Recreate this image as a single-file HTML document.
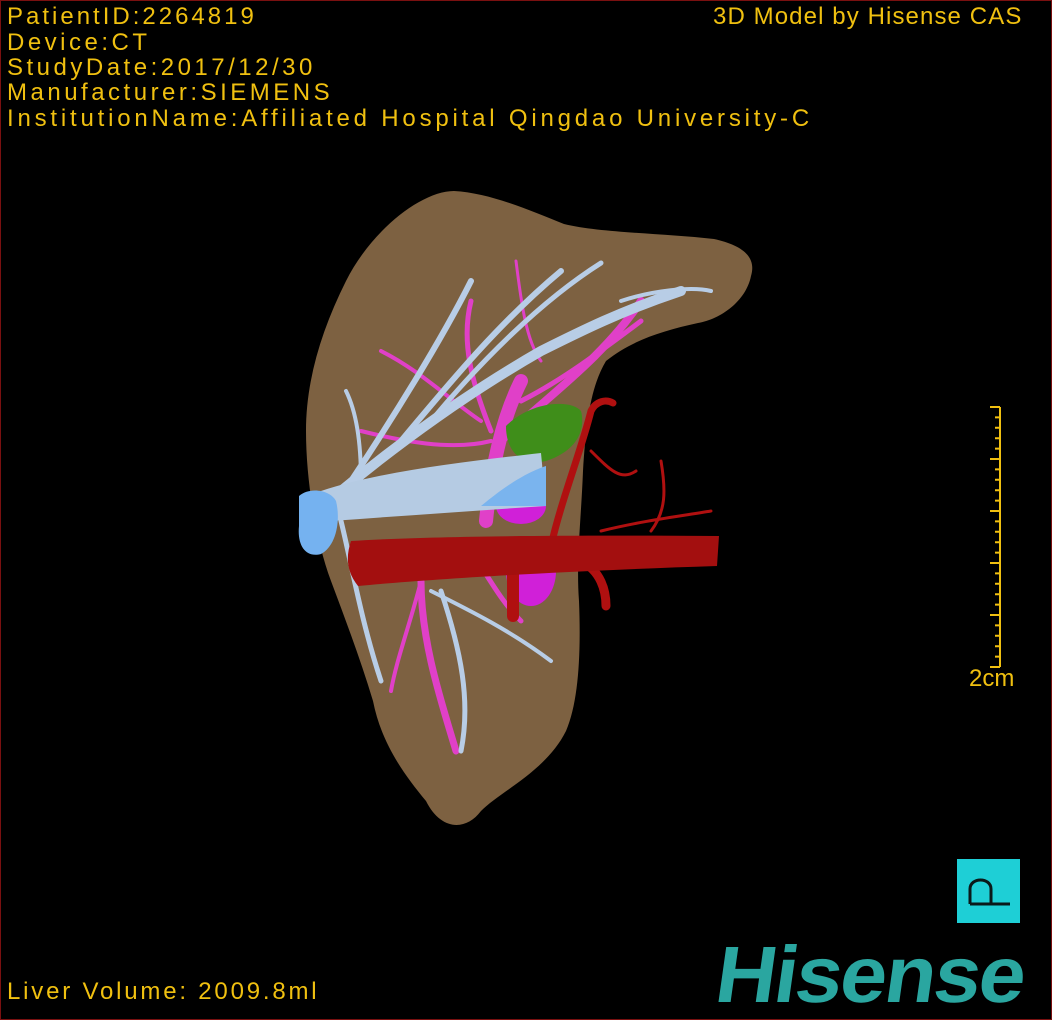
<!DOCTYPE html>
<html><head><meta charset="utf-8"><style>
html,body{margin:0;padding:0;background:#000;}
#w{position:relative;width:1052px;height:1020px;background:#000;overflow:hidden;box-sizing:border-box;border:1px solid #7a1010;}
.t{position:absolute;color:#f0c010;font-family:"Liberation Sans Narrow","Liberation Sans",sans-serif;font-size:24px;line-height:25px;white-space:pre;letter-spacing:3.5px;}
</style></head><body><div id="w">
<div class="t" style="left:6px;top:3px;letter-spacing:3px">PatientID:2264819</div>
<div class="t" style="left:6px;top:29px;">Device:CT</div>
<div class="t" style="left:6px;top:54px;">StudyDate:2017/12/30</div>
<div class="t" style="left:6px;top:79px;">Manufacturer:SIEMENS</div>
<div class="t" style="left:6px;top:105px;letter-spacing:3.8px">InstitutionName:Affiliated Hospital Qingdao University-C</div>
<div class="t" style="left:712px;top:3px;letter-spacing:1.1px;">3D Model by Hisense CAS</div>
<div class="t" style="left:6px;top:978px;letter-spacing:2.8px;">Liver Volume: 2009.8ml</div>
<div class="t" style="left:968px;top:665px;letter-spacing:0">2cm</div>
<svg width="1052" height="1020" style="position:absolute;left:0;top:0">
<path d="M453,190 C490,192 530,210 563,223 C600,232 660,232 713,238 C740,244 756,255 750,275 C745,300 720,318 697,322 C660,330 630,340 605,360 C590,385 585,420 582,470 C580,520 575,560 578,600 C580,650 578,700 565,730 C545,770 500,790 480,810 C465,830 440,830 425,800 C400,770 380,740 372,700 C360,660 345,620 330,580 C315,540 305,480 305,430 C305,380 320,330 345,280 C370,230 420,190 453,190 Z" fill="#7d6141"/>
<g stroke="#e040c8" fill="none" stroke-linecap="round">
<path d="M485,520 C490,470 500,420 520,380" stroke-width="14"/>
<path d="M500,440 C540,400 600,360 640,300" stroke-width="8"/>
<path d="M520,400 C560,380 600,350 640,320" stroke-width="5"/>
<path d="M490,430 C470,380 460,340 470,300" stroke-width="5"/>
<path d="M480,420 C450,400 420,370 380,350" stroke-width="4"/>
<path d="M490,440 C450,450 400,440 360,430" stroke-width="4"/>
<path d="M420,580 C420,640 440,700 455,750" stroke-width="7"/>
<path d="M420,580 C410,620 395,660 390,690" stroke-width="4"/>
<path d="M470,550 C490,580 500,600 520,620" stroke-width="5"/>
<path d="M515,260 C520,300 525,340 540,360" stroke-width="3"/>
</g>
<ellipse cx="530" cy="570" rx="25" ry="35" fill="#d020d8"/>
<ellipse cx="520" cy="505" rx="25" ry="18" fill="#d020d8"/>
<path d="M505,425 C530,400 570,398 580,410 C585,430 575,450 545,460 C525,465 505,455 505,425 Z" fill="#3f8e1a"/>
<g stroke="#b8cde6" fill="none" stroke-linecap="round">
<path d="M340,490 C400,440 470,390 540,350 C580,330 620,310 680,290" stroke-width="10"/>
<path d="M350,480 C390,420 440,340 470,280" stroke-width="6"/>
<path d="M400,440 C450,380 500,320 560,270" stroke-width="6"/>
<path d="M430,420 C480,360 540,300 600,262" stroke-width="5"/>
<path d="M620,300 C650,290 690,285 710,290" stroke-width="4"/>
<path d="M360,480 C360,440 355,410 345,390" stroke-width="4"/>
<path d="M340,520 C350,560 360,620 380,680" stroke-width="5"/>
<path d="M440,590 C460,650 470,700 460,750" stroke-width="5"/>
<path d="M430,590 C470,610 510,630 550,660" stroke-width="4"/>
</g>
<path d="M320,490 C380,470 470,460 540,452 L545,505 C470,510 400,515 330,520 Z" fill="#b5cbe3"/>
<path d="M480,505 C510,480 530,470 545,465 L545,505 Z" fill="#7ab4ee"/>
<path d="M298,495 C310,485 330,490 335,500 C340,520 335,545 320,553 C305,557 296,545 298,525 Z" fill="#75b2f0"/>
<g stroke="#b01010" fill="none" stroke-linecap="round">
<path d="M550,545 C560,500 580,450 590,410 C595,400 605,398 612,402" stroke-width="7"/>
<path d="M580,560 C600,570 605,590 605,605" stroke-width="9"/>
<path d="M512,560 L512,615" stroke-width="12"/>
<path d="M590,450 C610,470 620,480 635,470" stroke-width="3"/>
<path d="M600,530 C640,520 680,515 710,510" stroke-width="3"/>
<path d="M660,460 C665,490 665,510 650,530" stroke-width="3"/>
</g>
<path d="M350,540 C430,535 560,534 718,535 L716,565 C560,570 430,578 357,585 C345,570 345,555 350,540 Z" fill="#a30f0f"/>
<g stroke="#f0c010" stroke-width="2">
<line x1="999" y1="406" x2="999" y2="666"/>
<line x1="989" y1="406" x2="999" y2="406"/>
<line x1="989" y1="458" x2="999" y2="458"/>
<line x1="989" y1="510" x2="999" y2="510"/>
<line x1="989" y1="562" x2="999" y2="562"/>
<line x1="989" y1="614" x2="999" y2="614"/>
<line x1="989" y1="666" x2="999" y2="666"/>
<path d="M994,416.4h5M994,426.8h5M994,437.2h5M994,447.6h5M994,468.4h5M994,478.8h5M994,489.2h5M994,499.6h5M994,520.4h5M994,530.8h5M994,541.2h5M994,551.6h5M994,572.4h5M994,582.8h5M994,593.2h5M994,603.6h5M994,624.4h5M994,634.8h5M994,645.2h5M994,655.6h5"/>
</g>
<rect x="956" y="858" width="63" height="64" fill="#1ecfd6"/>
<path d="M969,903 L969,888 C969,876 990,876 990,888 L990,903 M969,903 L1009,903" stroke="#0a1a1a" stroke-width="3" fill="none"/>
</svg>
<div style="position:absolute;left:710px;top:934px;color:#2aa6a0;font-family:'Liberation Sans',sans-serif;font-weight:bold;font-size:80px;line-height:80px;letter-spacing:-2px;transform:skewX(-8deg) scaleX(1.05);transform-origin:0 100%">Hisense</div>
</div></body></html>
